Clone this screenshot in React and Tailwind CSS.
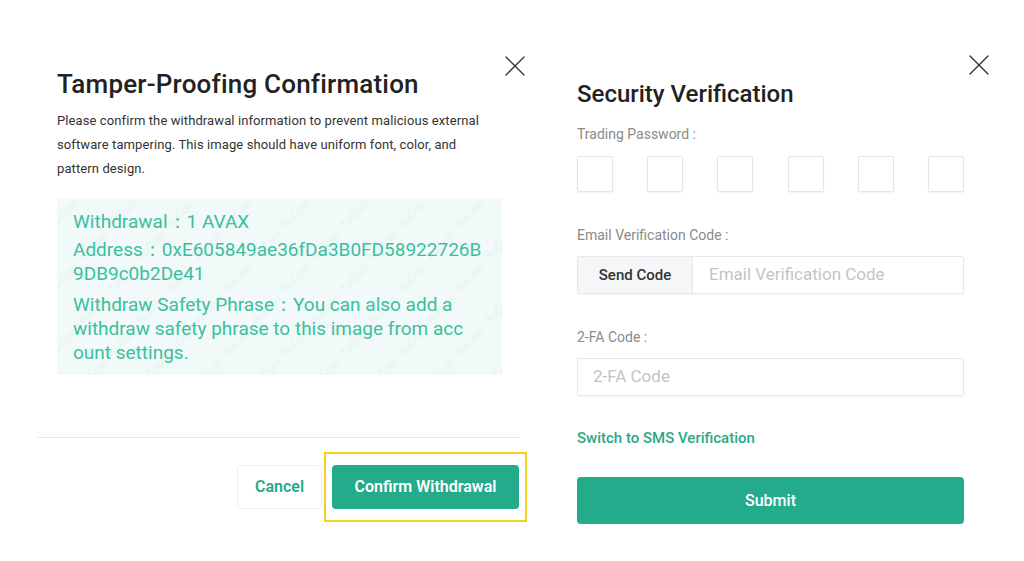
import { X } from 'lucide-react'

const font = { fontFamily: 'Roboto, "Noto Sans", sans-serif' }

const Watermark = () => {
    const marks = []
    for (let r = 0; r < 6; r++) {
        for (let c = 0; c < 8; c++) {
            marks.push(
                <span
                    key={`${r}-${c}`}
                    className="absolute text-[11px] text-[#e6f3f0] -rotate-45 select-none"
                    style={{ left: c * 58 - 10 + (r % 2) * 29, top: r * 32 + 4 }}>
                    KuCoin
                </span>
            )
        }
    }
    return <div className="absolute inset-0 overflow-hidden pointer-events-none">{marks}</div>
}

const TamperPanel = () => (
    <div className="relative w-[482px] ml-[38px] pt-[68px]">
        <button className="absolute right-[-13px] top-[48px] text-[#333]">
            <X size={36} strokeWidth={0.9} />
        </button>
        <div className="pl-[19px] pr-[18px]">
            <h1 className="text-[26px] leading-[32px] font-medium text-[#222] tracking-[0.2px]">
                Tamper-Proofing Confirmation
            </h1>
            <p className="mt-[9px] w-[428px] text-[13px] leading-[24px] text-[#333] tracking-[0.1px]">
                Please confirm the withdrawal information to prevent malicious external software
                tampering. This image should have uniform font, color, and pattern design.
            </p>
            <div className="relative mt-[17px] w-[445px] h-[177px] bg-[#f1faf8] px-[16px] pt-[12px] text-[19px] leading-[24px] text-[#3bbf9f] whitespace-nowrap">
                <Watermark />
                <div className="relative">
                    <p>Withdrawal：1 AVAX</p>
                    <p className="mt-[4px]">
                        Address：0xE605849ae36fDa3B0FD58922726B
                        <br />
                        9DB9c0b2De41
                    </p>
                    <p className="mt-[7px]">
                        Withdraw Safety Phrase：You can also add a
                        <br />
                        withdraw safety phrase to this image from acc
                        <br />
                        ount settings.
                    </p>
                </div>
            </div>
        </div>
        <div className="mt-[62px] border-t border-[#e6e6e6]" />
        <div className="flex justify-end items-center gap-[2px] mt-[14px] mr-[-7px]">
            <button className="w-[85px] h-[44px] rounded-[4px] border border-[#eeeeee] text-[16px] font-semibold text-[#26a98a]">
                Cancel
            </button>
            <div className="border-2 border-[#f3d21c] pt-[11px] pb-[11px] pl-[6px] pr-[6px]">
                <button className="w-[187px] h-[44px] rounded-[4px] bg-[#24ab8b] text-[16px] font-semibold text-white">
                    Confirm Withdrawal
                </button>
            </div>
        </div>
    </div>
)

const Label = ({ children }) => (
    <p className="text-[14px] leading-[20px] text-[#8a8a8a]">{children}</p>
)

const SecurityPanel = () => (
    <div className="relative ml-[57px] w-[387px] pt-[80px]">
        <button className="absolute right-[-33px] top-[47px] text-[#333]">
            <X size={36} strokeWidth={0.9} />
        </button>
        <h2 className="text-[24px] leading-[28px] font-medium text-[#222]">Security Verification</h2>
        <div className="mt-[16px]">
            <Label>Trading Password :</Label>
        </div>
        <div className="flex justify-between mt-[12px]">
            {[0, 1, 2, 3, 4, 5].map(i => (
                <div
                    key={i}
                    className="w-[36px] h-[36px] border border-[#e5e5e5] rounded-[2px] shadow-[0_1px_2px_rgba(0,0,0,0.06)]"
                />
            ))}
        </div>
        <div className="mt-[33px]">
            <Label>Email Verification Code :</Label>
        </div>
        <div className="flex mt-[11px] h-[38px] border border-[#e8e8e8] rounded-[2px] shadow-[0_1px_2px_rgba(0,0,0,0.05)]">
            <div className="w-[115px] bg-[#f4f6f8] border-r border-[#e8e8e8] flex items-center justify-center text-[15px] font-medium text-[#333]">
                Send Code
            </div>
            <div className="flex items-center pl-[16px] text-[17px] text-[#c4c4c4]">
                Email Verification Code
            </div>
        </div>
        <div className="mt-[33px]">
            <Label>2-FA Code :</Label>
        </div>
        <div className="mt-[11px] h-[38px] border border-[#e8e8e8] rounded-[2px] flex items-center pl-[15px] text-[17px] text-[#c4c4c4] shadow-[0_1px_2px_rgba(0,0,0,0.05)]">
            2-FA Code
        </div>
        <p className="mt-[32px] text-[15px] leading-[20px] font-medium text-[#2aa889]">
            Switch to SMS Verification
        </p>
        <button className="mt-[29px] w-full h-[47px] rounded-[4px] bg-[#24ab8b] text-[16px] font-medium text-white">
            Submit
        </button>
    </div>
)

export default function App() {
    return (
        <div className="w-[1024px] h-[561px] bg-white flex overflow-hidden" style={font}>
            <TamperPanel />
            <SecurityPanel />
        </div>
    )
}
